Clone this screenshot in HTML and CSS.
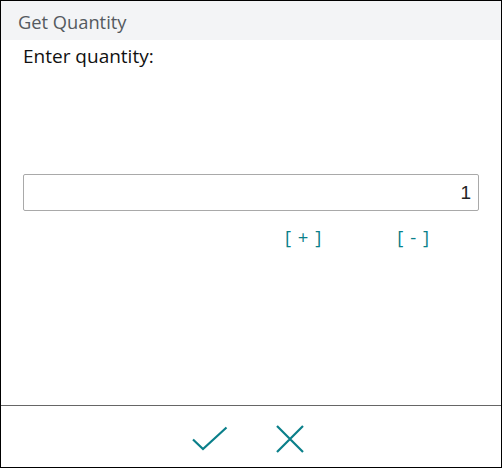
FILE: index.html
```html
<!DOCTYPE html>
<html>
<head>
<meta charset="utf-8">
<link rel="stylesheet" href="styles.css">
</head>
<body>
<div class="dialog">
  <div class="title">Get Quantity</div>
  <div class="content">
    <div class="label">Enter quantity:</div>
    <div class="field"><span class="value">1</span></div>
    <div class="steps">
      <span class="step plus">[&nbsp;+&nbsp;]</span>
      <span class="step minus">[&nbsp;-&nbsp;]</span>
    </div>
  </div>
  <div class="footer">
    <svg class="icon ok" width="36" height="26" viewBox="0 0 36 26"><path d="M1 13.5 L11 23 L34.5 1.5" fill="none" stroke="#0a7f8a" stroke-width="2.2"/></svg>
    <svg class="icon cancel" width="28" height="28" viewBox="0 0 28 28"><path d="M1 1 L27 27 M27 1 L1 27" fill="none" stroke="#0a7f8a" stroke-width="2.2"/></svg>
  </div>
</div>
</body>
</html>
```
FILE: styles.css
```css
html, body { margin: 0; padding: 0; background: #fff; }
.dialog {
  width: 502px; height: 468px; box-sizing: border-box;
  border: 1px solid #000;
  display: flex; flex-direction: column;
  font-family: "Open Sans", "Noto Sans", sans-serif;
}
.title {
  height: 39px; background: #f3f4f6;
  color: #555a60; font-size: 18.3px;
  padding-left: 17px; line-height: 42px;
  box-sizing: border-box;
}
.content { flex: 1; padding: 0 22px; }
.label { color: #111; font-size: 19px; line-height: 30px; margin-top: 1px; }
.field {
  margin-top: 103px; height: 37px; box-sizing: border-box;
  border: 1px solid #a9a9a9; border-radius: 2px;
  display: flex; align-items: center; justify-content: flex-end;
  padding-right: 7px;
  font-family: "Liberation Sans", Arial, sans-serif; font-size: 19px; color: #222;
}
.steps { display: flex; margin-top: 13px; padding-left: 262px; }
.step { color: #0a7f8a; font-size: 18.5px; font-family: "Open Sans", sans-serif; word-spacing: 2px; }
.minus { margin-left: 76px; }
.footer {
  height: 62px; border-top: 1px solid #666; box-sizing: border-box;
  display: flex; justify-content: center; align-items: center; gap: 48px;
  padding-right: 6px; padding-top: 4px;
}
.icon { display: block; }
```
